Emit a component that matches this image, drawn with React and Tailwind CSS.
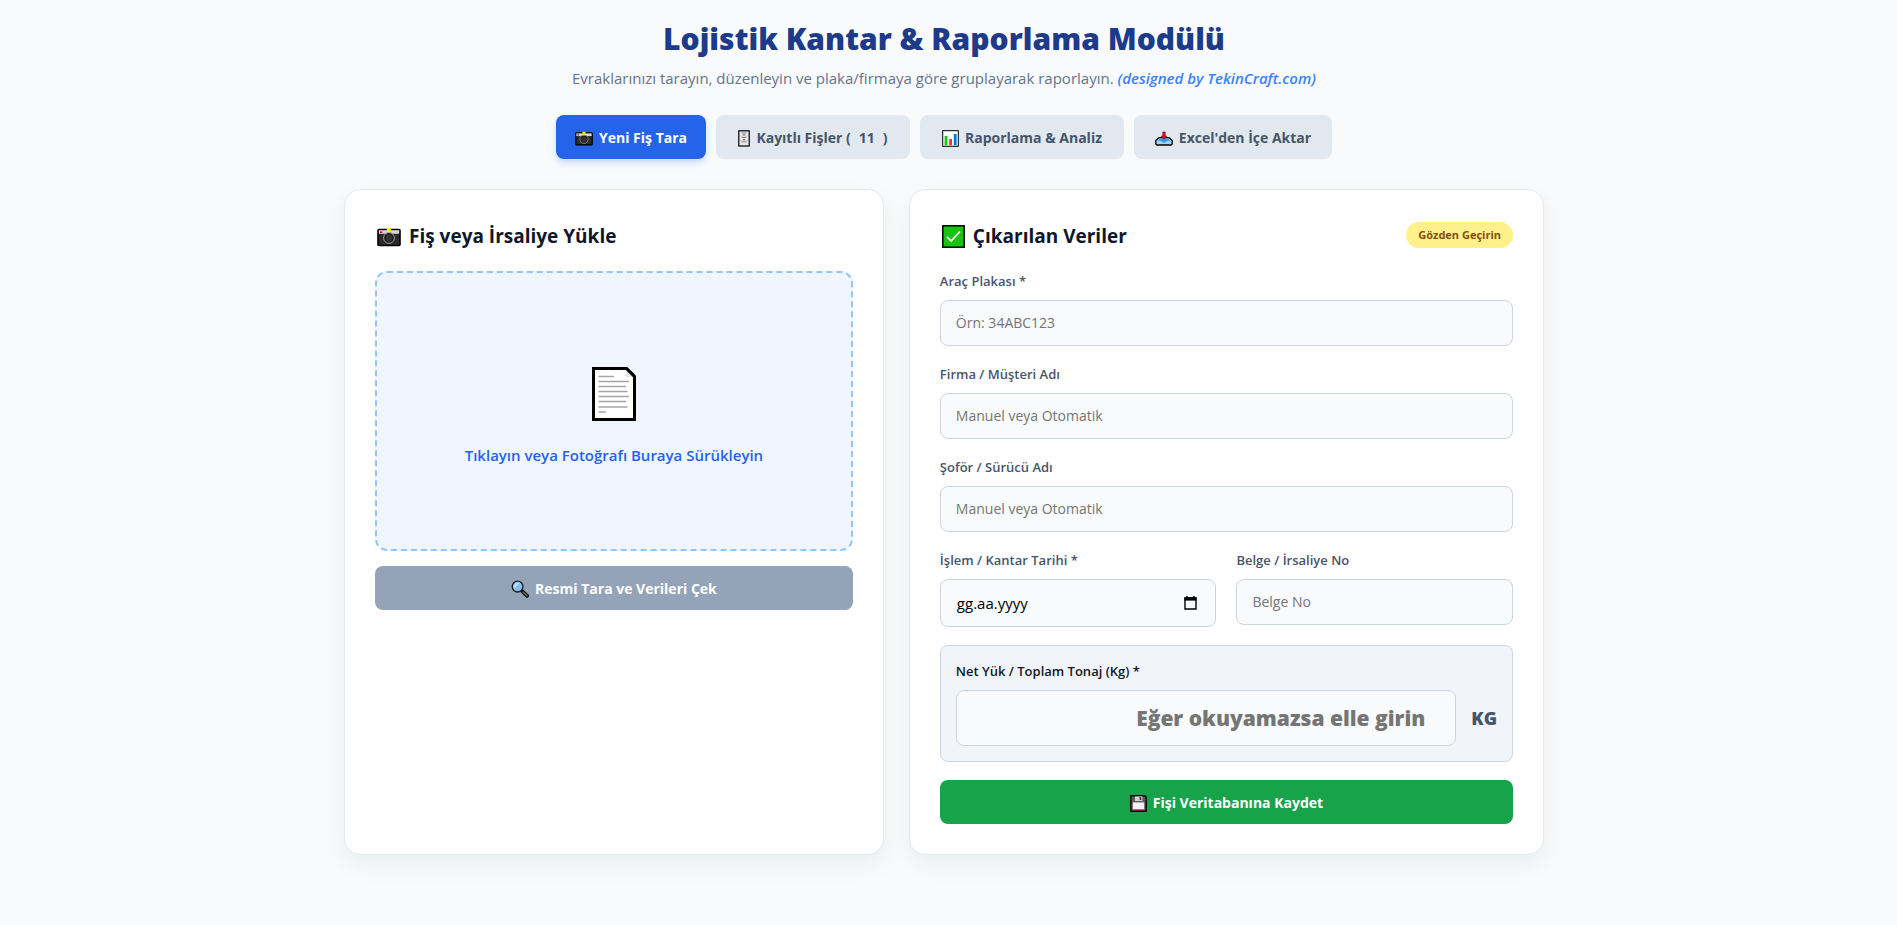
import React, { useState } from 'react';

const CameraIcon = ({ className }) => (
  <svg viewBox="0 0 24 20" className={className} aria-hidden="true">
    <rect x="1" y="2.5" width="22" height="16" rx="1" fill="#2b2b2b" stroke="#000" strokeWidth="1.6" />
    <rect x="1.8" y="3.2" width="20.4" height="3.6" fill="#d4d4d4" />
    <rect x="3" y="4.4" width="2.4" height="1.6" fill="#e81224" />
    <circle cx="12" cy="11" r="5.4" fill="#1b1b1b" stroke="#9b9b9b" strokeWidth="1" />
    <circle cx="12" cy="11" r="3.4" fill="#333" />
    <path d="M10 1h4v3l-2 1.6L10 4z" fill="#fff100" />
  </svg>
);

const CabinetIcon = ({ className }) => (
  <svg viewBox="0 0 12 17" className={className} aria-hidden="true">
    <rect x="0.8" y="0.8" width="10.4" height="15.2" fill="#e6e6e6" stroke="#000" strokeWidth="1.2" />
    <path d="M3.6 3h4.8M3.6 7.4h4.8M3.6 11.8h4.8" stroke="#777" strokeWidth="0.8" />
    <path d="M2 6h8M2 10.6h8" stroke="#bbb" strokeWidth="0.6" />
    <rect x="5" y="4.2" width="2" height="1.4" fill="#888" />
    <rect x="5" y="8.8" width="2" height="1.4" fill="#888" />
  </svg>
);

const ChartIcon = ({ className }) => (
  <svg viewBox="0 0 17 17" className={className} aria-hidden="true">
    <rect x="0.7" y="0.7" width="15.6" height="15.6" fill="#fff" stroke="#000" strokeWidth="1" />
    <rect x="2.6" y="6" width="2.8" height="9.4" fill="#16c60c" />
    <rect x="7.2" y="9" width="2.8" height="6.4" fill="#f03a17" />
    <rect x="11.8" y="4" width="2.8" height="11.4" fill="#0078d7" />
  </svg>
);

const InboxIcon = ({ className }) => (
  <svg viewBox="0 0 18 15" className={className} aria-hidden="true">
    <path d="M0.8 9.5 4 6.6h10l3.2 2.9V13l-1 1H1.8l-1-1z" fill="#9fd3f7" stroke="#000" strokeWidth="1.3" />
    <path d="M3 9.4 5 7.4h8l2 2-3 .6-3 2-3-2z" fill="#3a96dd" />
    <path d="M7.8 1h2.4v4h1.6L9 8.4 6.2 5h1.6z" fill="#e81224" stroke="#5a0007" strokeWidth="0.6" />
  </svg>
);

const DocumentIcon = ({ className }) => (
  <svg viewBox="0 0 44 54" className={className} aria-hidden="true">
    <path d="M1.5 1.5h33l8 8v43h-41z" fill="#fff" stroke="#000" strokeWidth="3" />
    <path d="M34 3v7h7z" fill="#e6e6e6" />
    <path d="M34.5 1.5l8 8" stroke="#000" strokeWidth="3" />
    <path
      d="M6.5 9.5H22M6.5 14.5H37M6.5 19.5H34M6.5 24.5H35.5M6.5 29.5H37M6.5 34.5H34M6.5 40H35.5M6.5 45H14"
      stroke="#a5a5a5"
      strokeWidth="1.6"
    />
  </svg>
);

const SearchIcon = ({ className }) => (
  <svg viewBox="0 0 18 18" className={className} aria-hidden="true">
    <path d="M10.5 10.5l5.6 5.4" stroke="#000" strokeWidth="3.6" strokeLinecap="round" />
    <path d="M12 12l4 3.8" stroke="#767676" strokeWidth="1.4" strokeLinecap="round" />
    <circle cx="6.6" cy="6.6" r="5.4" fill="#83beec" stroke="#1b1b1b" strokeWidth="1.3" />
    <path d="M3 8.5 8.5 3A4.4 4.4 0 0 0 3 8.5z" fill="#c7e3f8" />
  </svg>
);

const CheckIcon = ({ className }) => (
  <svg viewBox="0 0 23 23" className={className} aria-hidden="true">
    <rect x="0.8" y="0.8" width="21.4" height="21.4" fill="#16c60c" stroke="#000" strokeWidth="1.5" />
    <path d="M5 11.8l4.2 4.2 8.8-9.6" fill="none" stroke="#fff" strokeWidth="1.7" />
  </svg>
);

const FloppyIcon = ({ className }) => (
  <svg viewBox="0 0 17 17" className={className} aria-hidden="true">
    <path d="M0.8 0.8h14l1.4 1.4v14H0.8z" fill="#5c5c5c" stroke="#000" strokeWidth="1.4" />
    <rect x="5" y="1.4" width="7.4" height="4.6" fill="#d0d0d0" />
    <rect x="9.6" y="2" width="1.6" height="3" fill="#333" />
    <rect x="2.8" y="7.4" width="11.4" height="7.4" fill="#f2f2f2" />
    <rect x="2.8" y="14.4" width="11.4" height="1.2" fill="#c30052" />
  </svg>
);

const CalendarIcon = ({ className }) => (
  <svg viewBox="0 0 13 14" className={className} aria-hidden="true">
    <path d="M1 2h11v11H1z" fill="none" stroke="#000" strokeWidth="1.4" />
    <path d="M0.4 1.4h12.2v3.2H0.4z" />
    <path d="M3 0v2M10 0v2" stroke="#000" strokeWidth="1.4" />
  </svg>
);

const tabs = [
  { id: 'scan', label: 'Yeni Fiş Tara', icon: <CameraIcon className="w-[18px] h-[15px]" />, width: 'w-[150px]' },
  { id: 'records', label: 'Kayıtlı Fişler', count: 11, icon: <CabinetIcon className="w-3 h-[17px]" />, width: 'w-[194px]' },
  { id: 'report', label: 'Raporlama & Analiz', icon: <ChartIcon className="w-[17px] h-[17px]" />, width: 'w-[204px]' },
  { id: 'import', label: "Excel'den İçe Aktar", icon: <InboxIcon className="w-[18px] h-[15px]" />, width: 'w-[198px]' },
];

const inputClass =
  'block w-full rounded-lg border border-[#cbd5e1] bg-[#f8fafc] px-[15px] py-3 text-sm leading-5 outline-none placeholder:text-[#757575]';

const Field = ({ id, label, children }) => (
  <div>
    <label htmlFor={id} className="mb-2 block text-[13px] leading-[21px] font-semibold text-[#475569]">
      {label}
    </label>
    {children}
  </div>
);

const App = () => {
  const [activeTab, setActiveTab] = useState('scan');

  return (
    <div className="min-h-screen bg-[#f8fafc] pt-[17px] pr-[9px] pb-[70px] font-['Open_Sans','Noto_Sans',sans-serif] text-[#0f172a]">
      <div className="mx-auto max-w-[1200px]">
        {/* Header */}
        <header className="text-center">
          <h1 className="text-[30px] leading-[43px] font-extrabold text-[#1e3a8a]">
            Lojistik Kantar &amp; Raporlama Modülü
          </h1>
          <p className="mt-[7px] text-[15px] leading-[22px] text-[#64748b]">
            Evraklarınızı tarayın, düzenleyin ve plaka/firmaya göre gruplayarak raporlayın.{' '}
            <span className="font-semibold text-[#3b82f6] italic">(designed by TekinCraft.com)</span>
          </p>
        </header>

        {/* Tabs */}
        <nav className="mt-[26px] flex flex-wrap justify-center gap-2.5">
          {tabs.map(tab => (
            <button
              key={tab.id}
              type="button"
              onClick={() => setActiveTab(tab.id)}
              className={`flex h-11 cursor-pointer items-center justify-center gap-1.5 rounded-lg pt-0.5 text-sm font-bold whitespace-nowrap ${tab.width} ${
                activeTab === tab.id
                  ? 'bg-[#2563eb] text-white shadow-[0_4px_6px_rgba(37,99,235,0.2)]'
                  : 'bg-[#e2e8f0] text-[#475569]'
              }`}
            >
              {tab.icon}
              <span>
                {tab.label}
                {tab.count && (
                  <>
                    {' ('}
                    <span className="px-2">{tab.count}</span>
                    {')'}
                  </>
                )}
              </span>
            </button>
          ))}
        </nav>

        <main className="mt-[30px] grid grid-cols-1 gap-[25px] lg:grid-cols-[0.85fr_1fr]">
          {/* Upload */}
          <section className="rounded-2xl border border-[#e2e8f0] bg-white p-[30px] shadow-[0_10px_25px_rgba(0,0,0,0.05)]">
            <h2 className="mb-[18px] flex items-center gap-2 pl-0.5 text-[19px] leading-[33px] font-bold">
              <CameraIcon className="h-5 w-6" />
              Fiş veya İrsaliye Yükle
            </h2>
            <button
              type="button"
              className="flex h-[280px] w-full cursor-pointer flex-col items-center justify-center gap-[22px] rounded-xl border-2 border-dashed border-[#93c5fd] bg-[#eff6ff] pt-3"
            >
              <DocumentIcon className="h-[54px] w-11" />
              <span className="text-[15px] leading-6 font-semibold text-[#2563eb]">
                Tıklayın veya Fotoğrafı Buraya Sürükleyin
              </span>
            </button>
            <button
              type="button"
              className="mt-[15px] flex h-11 w-full items-center justify-center gap-1.5 rounded-lg bg-[#94a3b8] pt-0.5 text-sm font-bold text-white"
            >
              <SearchIcon className="h-[18px] w-[18px]" />
              Resmi Tara ve Verileri Çek
            </button>
          </section>

          {/* Extracted data */}
          <section className="rounded-2xl border border-[#e2e8f0] bg-white p-[30px] shadow-[0_10px_25px_rgba(0,0,0,0.05)]">
            <div className="mb-[18px] flex items-start justify-between">
              <h2 className="flex items-center gap-2 pl-0.5 text-[19px] leading-[33px] font-bold">
                <CheckIcon className="h-[23px] w-[23px]" />
                Çıkarılan Veriler
              </h2>
              <span className="mt-0.5 rounded-full bg-[#fef08a] px-3 text-[11px] leading-[26px] font-bold text-[#854d0e]">
                Gözden Geçirin
              </span>
            </div>

            <form className="flex flex-col gap-[18px]" onSubmit={e => e.preventDefault()}>
              <Field id="plate" label="Araç Plakası *">
                <input id="plate" type="text" placeholder="Örn: 34ABC123" className={inputClass} />
              </Field>
              <Field id="company" label="Firma / Müşteri Adı">
                <input id="company" type="text" placeholder="Manuel veya Otomatik" className={inputClass} />
              </Field>
              <Field id="driver" label="Şoför / Sürücü Adı">
                <input id="driver" type="text" placeholder="Manuel veya Otomatik" className={inputClass} />
              </Field>

              <div className="grid grid-cols-2 gap-5">
                <Field id="date" label="İşlem / Kantar Tarihi *">
                  <div className="flex h-12 items-center rounded-lg border border-[#cbd5e1] bg-[#f8fafc] px-4">
                    <input
                      id="date"
                      type="text"
                      placeholder="gg.aa.yyyy"
                      className="min-w-0 flex-1 bg-transparent text-[15px] leading-5 outline-none placeholder:text-black"
                    />
                    <button type="button" aria-label="Takvim" className="mr-0.5">
                      <CalendarIcon className="h-3.5 w-[13px]" />
                    </button>
                  </div>
                </Field>
                <Field id="docNo" label="Belge / İrsaliye No">
                  <input id="docNo" type="text" placeholder="Belge No" className={inputClass} />
                </Field>
              </div>

              <div className="rounded-lg border border-[#cbd5e1] bg-[#f1f5f9] p-[15px]">
                <label htmlFor="net" className="mb-2 block text-[13px] leading-[21px] font-semibold">
                  Net Yük / Toplam Tonaj (Kg) *
                </label>
                <div className="flex items-center gap-[15px]">
                  <input
                    id="net"
                    type="text"
                    inputMode="numeric"
                    placeholder="Eğer okuyamazsa elle girin"
                    className="h-14 min-w-0 flex-1 rounded-lg border border-[#cbd5e1] bg-[#f8fafc] pr-[30px] pl-[15px] text-right text-[21px] font-extrabold outline-none placeholder:text-[#757575]"
                  />
                  <span className="text-lg font-extrabold text-[#475569]">KG</span>
                </div>
              </div>

              <button
                type="submit"
                className="flex h-11 w-full cursor-pointer items-center justify-center gap-1.5 rounded-lg bg-[#16a34a] pt-0.5 text-sm font-bold text-white"
              >
                <FloppyIcon className="h-[17px] w-[17px]" />
                Fişi Veritabanına Kaydet
              </button>
            </form>
          </section>
        </main>
      </div>
    </div>
  );
};

export default App;
